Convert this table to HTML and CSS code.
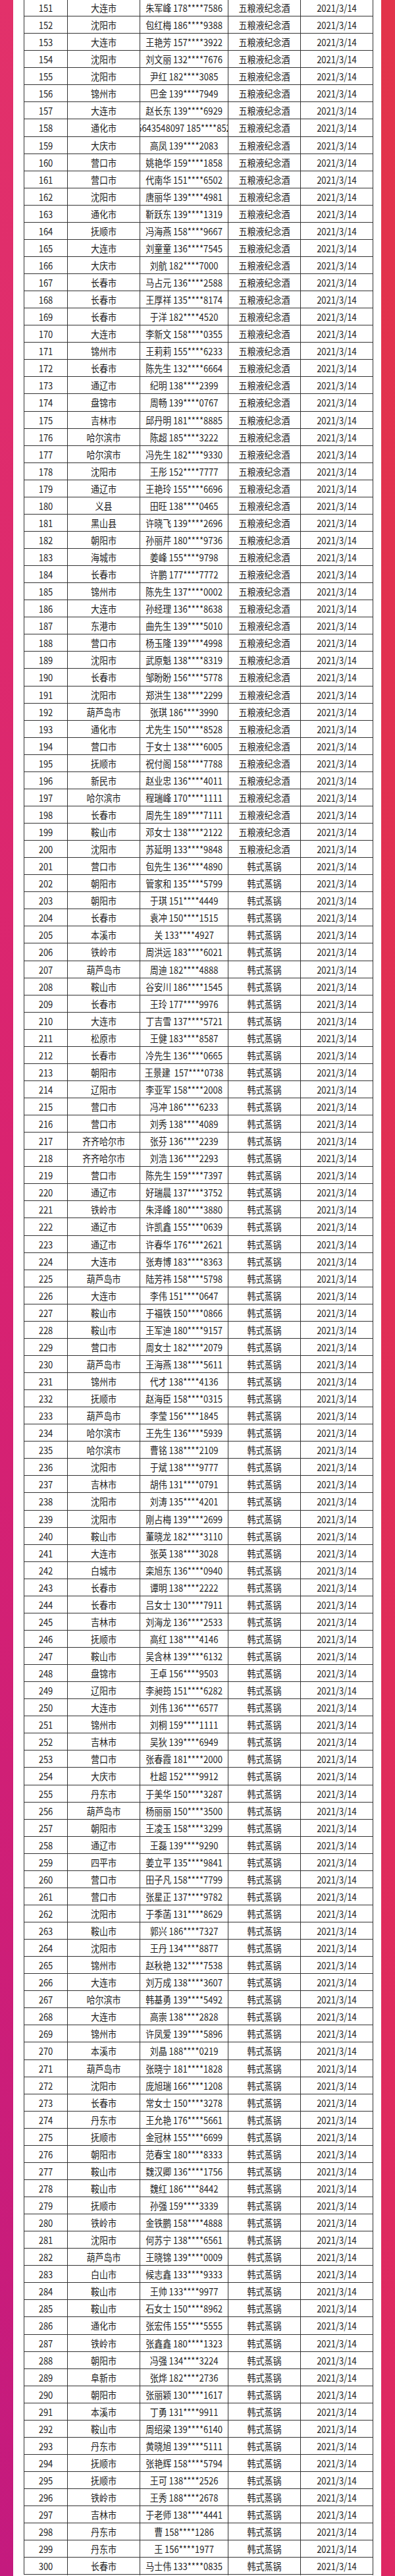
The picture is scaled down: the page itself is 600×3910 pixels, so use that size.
FILE: index.html
```html
<!DOCTYPE html>
<html lang="zh-CN">
<head>
<meta charset="utf-8">
<title>中奖名单</title>
<link rel="stylesheet" href="styles.css">
</head>
<body>
<div class="page">
  <div class="strip strip-l"></div>
  <div class="table">
    <div class="row"><span>151</span><span>大连市</span><span>朱军峰 178****7586</span><span>五粮液纪念酒</span><span>2021/3/14</span></div>
    <div class="row"><span>152</span><span>沈阳市</span><span>包红梅 186****9388</span><span>五粮液纪念酒</span><span>2021/3/14</span></div>
    <div class="row"><span>153</span><span>大连市</span><span>王艳芳 157****3922</span><span>五粮液纪念酒</span><span>2021/3/14</span></div>
    <div class="row"><span>154</span><span>沈阳市</span><span>刘文丽 132****7676</span><span>五粮液纪念酒</span><span>2021/3/14</span></div>
    <div class="row"><span>155</span><span>沈阳市</span><span>尹红 182****3085</span><span>五粮液纪念酒</span><span>2021/3/14</span></div>
    <div class="row"><span>156</span><span>锦州市</span><span>巴金 139****7949</span><span>五粮液纪念酒</span><span>2021/3/14</span></div>
    <div class="row"><span>157</span><span>大连市</span><span>赵长东 139****6929</span><span>五粮液纪念酒</span><span>2021/3/14</span></div>
    <div class="row"><span>158</span><span>通化市</span><span>15643548097 185****8522</span><span>五粮液纪念酒</span><span>2021/3/14</span></div>
    <div class="row"><span>159</span><span>大庆市</span><span>高凤 139****2083</span><span>五粮液纪念酒</span><span>2021/3/14</span></div>
    <div class="row"><span>160</span><span>营口市</span><span>姚艳华 159****1858</span><span>五粮液纪念酒</span><span>2021/3/14</span></div>
    <div class="row"><span>161</span><span>营口市</span><span>代南华 151****6502</span><span>五粮液纪念酒</span><span>2021/3/14</span></div>
    <div class="row"><span>162</span><span>沈阳市</span><span>唐丽华 139****4981</span><span>五粮液纪念酒</span><span>2021/3/14</span></div>
    <div class="row"><span>163</span><span>通化市</span><span>靳跃东 139****1319</span><span>五粮液纪念酒</span><span>2021/3/14</span></div>
    <div class="row"><span>164</span><span>抚顺市</span><span>冯海燕 158****9667</span><span>五粮液纪念酒</span><span>2021/3/14</span></div>
    <div class="row"><span>165</span><span>大连市</span><span>刘童童 136****7545</span><span>五粮液纪念酒</span><span>2021/3/14</span></div>
    <div class="row"><span>166</span><span>大庆市</span><span>刘航 182****7000</span><span>五粮液纪念酒</span><span>2021/3/14</span></div>
    <div class="row"><span>167</span><span>长春市</span><span>马占元 136****2588</span><span>五粮液纪念酒</span><span>2021/3/14</span></div>
    <div class="row"><span>168</span><span>长春市</span><span>王厚祥 135****8174</span><span>五粮液纪念酒</span><span>2021/3/14</span></div>
    <div class="row"><span>169</span><span>长春市</span><span>于洋 182****4520</span><span>五粮液纪念酒</span><span>2021/3/14</span></div>
    <div class="row"><span>170</span><span>大连市</span><span>李新文 158****0355</span><span>五粮液纪念酒</span><span>2021/3/14</span></div>
    <div class="row"><span>171</span><span>锦州市</span><span>王莉莉 155****6233</span><span>五粮液纪念酒</span><span>2021/3/14</span></div>
    <div class="row"><span>172</span><span>长春市</span><span>陈先生 132****6664</span><span>五粮液纪念酒</span><span>2021/3/14</span></div>
    <div class="row"><span>173</span><span>通辽市</span><span>纪明 138****2399</span><span>五粮液纪念酒</span><span>2021/3/14</span></div>
    <div class="row"><span>174</span><span>盘锦市</span><span>周畅 139****0767</span><span>五粮液纪念酒</span><span>2021/3/14</span></div>
    <div class="row"><span>175</span><span>吉林市</span><span>邱丹明 181****8885</span><span>五粮液纪念酒</span><span>2021/3/14</span></div>
    <div class="row"><span>176</span><span>哈尔滨市</span><span>陈超 185****3222</span><span>五粮液纪念酒</span><span>2021/3/14</span></div>
    <div class="row"><span>177</span><span>哈尔滨市</span><span>冯先生 182****9330</span><span>五粮液纪念酒</span><span>2021/3/14</span></div>
    <div class="row"><span>178</span><span>沈阳市</span><span>王彤 152****7777</span><span>五粮液纪念酒</span><span>2021/3/14</span></div>
    <div class="row"><span>179</span><span>通辽市</span><span>王艳玲 155****6696</span><span>五粮液纪念酒</span><span>2021/3/14</span></div>
    <div class="row"><span>180</span><span>义县</span><span>田旺 138****0465</span><span>五粮液纪念酒</span><span>2021/3/14</span></div>
    <div class="row"><span>181</span><span>黑山县</span><span>许晓飞 139****2696</span><span>五粮液纪念酒</span><span>2021/3/14</span></div>
    <div class="row"><span>182</span><span>朝阳市</span><span>孙丽芹 180****9736</span><span>五粮液纪念酒</span><span>2021/3/14</span></div>
    <div class="row"><span>183</span><span>海城市</span><span>姜峰 155****9798</span><span>五粮液纪念酒</span><span>2021/3/14</span></div>
    <div class="row"><span>184</span><span>长春市</span><span>许鹏 177****7772</span><span>五粮液纪念酒</span><span>2021/3/14</span></div>
    <div class="row"><span>185</span><span>锦州市</span><span>陈先生 137****0002</span><span>五粮液纪念酒</span><span>2021/3/14</span></div>
    <div class="row"><span>186</span><span>大连市</span><span>孙经理 136****8638</span><span>五粮液纪念酒</span><span>2021/3/14</span></div>
    <div class="row"><span>187</span><span>东港市</span><span>曲先生 139****5010</span><span>五粮液纪念酒</span><span>2021/3/14</span></div>
    <div class="row"><span>188</span><span>营口市</span><span>杨玉隆 139****4998</span><span>五粮液纪念酒</span><span>2021/3/14</span></div>
    <div class="row"><span>189</span><span>沈阳市</span><span>武原魁 138****8319</span><span>五粮液纪念酒</span><span>2021/3/14</span></div>
    <div class="row"><span>190</span><span>长春市</span><span>邹盼盼 156****5778</span><span>五粮液纪念酒</span><span>2021/3/14</span></div>
    <div class="row"><span>191</span><span>沈阳市</span><span>郑洪生 138****2299</span><span>五粮液纪念酒</span><span>2021/3/14</span></div>
    <div class="row"><span>192</span><span>葫芦岛市</span><span>张琪 186****3990</span><span>五粮液纪念酒</span><span>2021/3/14</span></div>
    <div class="row"><span>193</span><span>通化市</span><span>尤先生 150****8528</span><span>五粮液纪念酒</span><span>2021/3/14</span></div>
    <div class="row"><span>194</span><span>营口市</span><span>于女士 138****6005</span><span>五粮液纪念酒</span><span>2021/3/14</span></div>
    <div class="row"><span>195</span><span>抚顺市</span><span>祝付阁 158****7788</span><span>五粮液纪念酒</span><span>2021/3/14</span></div>
    <div class="row"><span>196</span><span>新民市</span><span>赵业忠 136****4011</span><span>五粮液纪念酒</span><span>2021/3/14</span></div>
    <div class="row"><span>197</span><span>哈尔滨市</span><span>程瑞峰 170****1111</span><span>五粮液纪念酒</span><span>2021/3/14</span></div>
    <div class="row"><span>198</span><span>长春市</span><span>周先生 189****7111</span><span>五粮液纪念酒</span><span>2021/3/14</span></div>
    <div class="row"><span>199</span><span>鞍山市</span><span>邓女士 138****2122</span><span>五粮液纪念酒</span><span>2021/3/14</span></div>
    <div class="row"><span>200</span><span>沈阳市</span><span>苏延明 133****9848</span><span>五粮液纪念酒</span><span>2021/3/14</span></div>
    <div class="row"><span>201</span><span>营口市</span><span>包先生 136****4890</span><span>韩式蒸锅</span><span>2021/3/14</span></div>
    <div class="row"><span>202</span><span>朝阳市</span><span>管家和 135****5799</span><span>韩式蒸锅</span><span>2021/3/14</span></div>
    <div class="row"><span>203</span><span>朝阳市</span><span>于琪 151****4449</span><span>韩式蒸锅</span><span>2021/3/14</span></div>
    <div class="row"><span>204</span><span>长春市</span><span>袁冲 150****1515</span><span>韩式蒸锅</span><span>2021/3/14</span></div>
    <div class="row"><span>205</span><span>本溪市</span><span>关 133****4927</span><span>韩式蒸锅</span><span>2021/3/14</span></div>
    <div class="row"><span>206</span><span>铁岭市</span><span>周洪远 183****6021</span><span>韩式蒸锅</span><span>2021/3/14</span></div>
    <div class="row"><span>207</span><span>葫芦岛市</span><span>周迪 182****4888</span><span>韩式蒸锅</span><span>2021/3/14</span></div>
    <div class="row"><span>208</span><span>鞍山市</span><span>谷安川 186****1545</span><span>韩式蒸锅</span><span>2021/3/14</span></div>
    <div class="row"><span>209</span><span>长春市</span><span>王玲 177****9976</span><span>韩式蒸锅</span><span>2021/3/14</span></div>
    <div class="row"><span>210</span><span>大连市</span><span>丁吉雪 137****5721</span><span>韩式蒸锅</span><span>2021/3/14</span></div>
    <div class="row"><span>211</span><span>松原市</span><span>王健 183****8587</span><span>韩式蒸锅</span><span>2021/3/14</span></div>
    <div class="row"><span>212</span><span>长春市</span><span>冷先生 136****0665</span><span>韩式蒸锅</span><span>2021/3/14</span></div>
    <div class="row"><span>213</span><span>朝阳市</span><span>王景建&nbsp;&nbsp;157****0738</span><span>韩式蒸锅</span><span>2021/3/14</span></div>
    <div class="row"><span>214</span><span>辽阳市</span><span>李亚军 158****2008</span><span>韩式蒸锅</span><span>2021/3/14</span></div>
    <div class="row"><span>215</span><span>营口市</span><span>冯冲 186****6233</span><span>韩式蒸锅</span><span>2021/3/14</span></div>
    <div class="row"><span>216</span><span>营口市</span><span>刘秀 138****4089</span><span>韩式蒸锅</span><span>2021/3/14</span></div>
    <div class="row"><span>217</span><span>齐齐哈尔市</span><span>张芬 136****2239</span><span>韩式蒸锅</span><span>2021/3/14</span></div>
    <div class="row"><span>218</span><span>齐齐哈尔市</span><span>刘浩 136****2293</span><span>韩式蒸锅</span><span>2021/3/14</span></div>
    <div class="row"><span>219</span><span>营口市</span><span>陈先生 159****7397</span><span>韩式蒸锅</span><span>2021/3/14</span></div>
    <div class="row"><span>220</span><span>通辽市</span><span>好瑞晨 137****3752</span><span>韩式蒸锅</span><span>2021/3/14</span></div>
    <div class="row"><span>221</span><span>铁岭市</span><span>朱泽峰 180****3880</span><span>韩式蒸锅</span><span>2021/3/14</span></div>
    <div class="row"><span>222</span><span>通辽市</span><span>许凯鑫 155****0639</span><span>韩式蒸锅</span><span>2021/3/14</span></div>
    <div class="row"><span>223</span><span>通辽市</span><span>许春华 176****2621</span><span>韩式蒸锅</span><span>2021/3/14</span></div>
    <div class="row"><span>224</span><span>大连市</span><span>张寿博 183****8363</span><span>韩式蒸锅</span><span>2021/3/14</span></div>
    <div class="row"><span>225</span><span>葫芦岛市</span><span>陆芳祎 158****5798</span><span>韩式蒸锅</span><span>2021/3/14</span></div>
    <div class="row"><span>226</span><span>大连市</span><span>李伟 151****0647</span><span>韩式蒸锅</span><span>2021/3/14</span></div>
    <div class="row"><span>227</span><span>鞍山市</span><span>于福铁 150****0866</span><span>韩式蒸锅</span><span>2021/3/14</span></div>
    <div class="row"><span>228</span><span>鞍山市</span><span>王军迪 180****9157</span><span>韩式蒸锅</span><span>2021/3/14</span></div>
    <div class="row"><span>229</span><span>营口市</span><span>周女士 182****2079</span><span>韩式蒸锅</span><span>2021/3/14</span></div>
    <div class="row"><span>230</span><span>葫芦岛市</span><span>王海燕 138****5611</span><span>韩式蒸锅</span><span>2021/3/14</span></div>
    <div class="row"><span>231</span><span>锦州市</span><span>代才 138****4136</span><span>韩式蒸锅</span><span>2021/3/14</span></div>
    <div class="row"><span>232</span><span>抚顺市</span><span>赵海臣 158****0315</span><span>韩式蒸锅</span><span>2021/3/14</span></div>
    <div class="row"><span>233</span><span>葫芦岛市</span><span>李莹 156****1845</span><span>韩式蒸锅</span><span>2021/3/14</span></div>
    <div class="row"><span>234</span><span>哈尔滨市</span><span>王先生 136****5939</span><span>韩式蒸锅</span><span>2021/3/14</span></div>
    <div class="row"><span>235</span><span>哈尔滨市</span><span>曹铭 138****2109</span><span>韩式蒸锅</span><span>2021/3/14</span></div>
    <div class="row"><span>236</span><span>沈阳市</span><span>于斌 138****9777</span><span>韩式蒸锅</span><span>2021/3/14</span></div>
    <div class="row"><span>237</span><span>吉林市</span><span>胡伟 131****0791</span><span>韩式蒸锅</span><span>2021/3/14</span></div>
    <div class="row"><span>238</span><span>沈阳市</span><span>刘涛 135****4201</span><span>韩式蒸锅</span><span>2021/3/14</span></div>
    <div class="row"><span>239</span><span>沈阳市</span><span>刚占梅 139****2699</span><span>韩式蒸锅</span><span>2021/3/14</span></div>
    <div class="row"><span>240</span><span>鞍山市</span><span>董晓龙 182****3110</span><span>韩式蒸锅</span><span>2021/3/14</span></div>
    <div class="row"><span>241</span><span>大连市</span><span>张英 138****3028</span><span>韩式蒸锅</span><span>2021/3/14</span></div>
    <div class="row"><span>242</span><span>白城市</span><span>栾旭东 136****0940</span><span>韩式蒸锅</span><span>2021/3/14</span></div>
    <div class="row"><span>243</span><span>长春市</span><span>谭明 138****2222</span><span>韩式蒸锅</span><span>2021/3/14</span></div>
    <div class="row"><span>244</span><span>长春市</span><span>吕女士 130****7911</span><span>韩式蒸锅</span><span>2021/3/14</span></div>
    <div class="row"><span>245</span><span>吉林市</span><span>刘海龙 136****2533</span><span>韩式蒸锅</span><span>2021/3/14</span></div>
    <div class="row"><span>246</span><span>抚顺市</span><span>高红 138****4146</span><span>韩式蒸锅</span><span>2021/3/14</span></div>
    <div class="row"><span>247</span><span>鞍山市</span><span>吴含林 139****6132</span><span>韩式蒸锅</span><span>2021/3/14</span></div>
    <div class="row"><span>248</span><span>盘锦市</span><span>王卓 156****9503</span><span>韩式蒸锅</span><span>2021/3/14</span></div>
    <div class="row"><span>249</span><span>辽阳市</span><span>李昶筠 151****6282</span><span>韩式蒸锅</span><span>2021/3/14</span></div>
    <div class="row"><span>250</span><span>大连市</span><span>刘伟 136****6577</span><span>韩式蒸锅</span><span>2021/3/14</span></div>
    <div class="row"><span>251</span><span>锦州市</span><span>刘桐 159****1111</span><span>韩式蒸锅</span><span>2021/3/14</span></div>
    <div class="row"><span>252</span><span>吉林市</span><span>吴狄 139****6949</span><span>韩式蒸锅</span><span>2021/3/14</span></div>
    <div class="row"><span>253</span><span>营口市</span><span>张春霞 181****2000</span><span>韩式蒸锅</span><span>2021/3/14</span></div>
    <div class="row"><span>254</span><span>大庆市</span><span>杜超 152****9912</span><span>韩式蒸锅</span><span>2021/3/14</span></div>
    <div class="row"><span>255</span><span>丹东市</span><span>于美华 150****3287</span><span>韩式蒸锅</span><span>2021/3/14</span></div>
    <div class="row"><span>256</span><span>葫芦岛市</span><span>杨丽丽 150****3500</span><span>韩式蒸锅</span><span>2021/3/14</span></div>
    <div class="row"><span>257</span><span>朝阳市</span><span>王凌玉 158****3299</span><span>韩式蒸锅</span><span>2021/3/14</span></div>
    <div class="row"><span>258</span><span>通辽市</span><span>王磊 139****9290</span><span>韩式蒸锅</span><span>2021/3/14</span></div>
    <div class="row"><span>259</span><span>四平市</span><span>姜立平 135****9841</span><span>韩式蒸锅</span><span>2021/3/14</span></div>
    <div class="row"><span>260</span><span>营口市</span><span>田子凡 158****7799</span><span>韩式蒸锅</span><span>2021/3/14</span></div>
    <div class="row"><span>261</span><span>营口市</span><span>张星正 137****9782</span><span>韩式蒸锅</span><span>2021/3/14</span></div>
    <div class="row"><span>262</span><span>沈阳市</span><span>于季菡 131****8629</span><span>韩式蒸锅</span><span>2021/3/14</span></div>
    <div class="row"><span>263</span><span>鞍山市</span><span>郭兴 186****7327</span><span>韩式蒸锅</span><span>2021/3/14</span></div>
    <div class="row"><span>264</span><span>沈阳市</span><span>王丹 134****8877</span><span>韩式蒸锅</span><span>2021/3/14</span></div>
    <div class="row"><span>265</span><span>锦州市</span><span>赵秋艳 132****7538</span><span>韩式蒸锅</span><span>2021/3/14</span></div>
    <div class="row"><span>266</span><span>大连市</span><span>刘万成 138****3607</span><span>韩式蒸锅</span><span>2021/3/14</span></div>
    <div class="row"><span>267</span><span>哈尔滨市</span><span>韩基勇 139****5492</span><span>韩式蒸锅</span><span>2021/3/14</span></div>
    <div class="row"><span>268</span><span>大连市</span><span>高崇 138****2828</span><span>韩式蒸锅</span><span>2021/3/14</span></div>
    <div class="row"><span>269</span><span>锦州市</span><span>许凤爱 139****5896</span><span>韩式蒸锅</span><span>2021/3/14</span></div>
    <div class="row"><span>270</span><span>本溪市</span><span>刘晶 188****0219</span><span>韩式蒸锅</span><span>2021/3/14</span></div>
    <div class="row"><span>271</span><span>葫芦岛市</span><span>张晓宁 181****1828</span><span>韩式蒸锅</span><span>2021/3/14</span></div>
    <div class="row"><span>272</span><span>沈阳市</span><span>庞旭瑞 166****1208</span><span>韩式蒸锅</span><span>2021/3/14</span></div>
    <div class="row"><span>273</span><span>长春市</span><span>常女士 150****3278</span><span>韩式蒸锅</span><span>2021/3/14</span></div>
    <div class="row"><span>274</span><span>丹东市</span><span>王允艳 176****5661</span><span>韩式蒸锅</span><span>2021/3/14</span></div>
    <div class="row"><span>275</span><span>抚顺市</span><span>金冠林 155****6699</span><span>韩式蒸锅</span><span>2021/3/14</span></div>
    <div class="row"><span>276</span><span>朝阳市</span><span>范春宝 180****8333</span><span>韩式蒸锅</span><span>2021/3/14</span></div>
    <div class="row"><span>277</span><span>鞍山市</span><span>魏汉卿 136****1756</span><span>韩式蒸锅</span><span>2021/3/14</span></div>
    <div class="row"><span>278</span><span>鞍山市</span><span>魏红 186****8442</span><span>韩式蒸锅</span><span>2021/3/14</span></div>
    <div class="row"><span>279</span><span>抚顺市</span><span>孙强 159****3339</span><span>韩式蒸锅</span><span>2021/3/14</span></div>
    <div class="row"><span>280</span><span>铁岭市</span><span>金铁鹏 158****4888</span><span>韩式蒸锅</span><span>2021/3/14</span></div>
    <div class="row"><span>281</span><span>沈阳市</span><span>何苏宁 138****6561</span><span>韩式蒸锅</span><span>2021/3/14</span></div>
    <div class="row"><span>282</span><span>葫芦岛市</span><span>王晓锦 139****0009</span><span>韩式蒸锅</span><span>2021/3/14</span></div>
    <div class="row"><span>283</span><span>白山市</span><span>候志鑫 133****9333</span><span>韩式蒸锅</span><span>2021/3/14</span></div>
    <div class="row"><span>284</span><span>鞍山市</span><span>王帅 133****9977</span><span>韩式蒸锅</span><span>2021/3/14</span></div>
    <div class="row"><span>285</span><span>鞍山市</span><span>石女士 150****8962</span><span>韩式蒸锅</span><span>2021/3/14</span></div>
    <div class="row"><span>286</span><span>通化市</span><span>张宏伟 155****5555</span><span>韩式蒸锅</span><span>2021/3/14</span></div>
    <div class="row"><span>287</span><span>铁岭市</span><span>张鑫鑫 180****1323</span><span>韩式蒸锅</span><span>2021/3/14</span></div>
    <div class="row"><span>288</span><span>朝阳市</span><span>冯强 134****3224</span><span>韩式蒸锅</span><span>2021/3/14</span></div>
    <div class="row"><span>289</span><span>阜新市</span><span>张烨 182****2736</span><span>韩式蒸锅</span><span>2021/3/14</span></div>
    <div class="row"><span>290</span><span>朝阳市</span><span>张丽颖 130****1617</span><span>韩式蒸锅</span><span>2021/3/14</span></div>
    <div class="row"><span>291</span><span>本溪市</span><span>丁勇 131****9911</span><span>韩式蒸锅</span><span>2021/3/14</span></div>
    <div class="row"><span>292</span><span>鞍山市</span><span>周绍梁 139****6140</span><span>韩式蒸锅</span><span>2021/3/14</span></div>
    <div class="row"><span>293</span><span>丹东市</span><span>黄晓旭 139****5111</span><span>韩式蒸锅</span><span>2021/3/14</span></div>
    <div class="row"><span>294</span><span>抚顺市</span><span>张艳辉 158****5794</span><span>韩式蒸锅</span><span>2021/3/14</span></div>
    <div class="row"><span>295</span><span>抚顺市</span><span>王可 138****2526</span><span>韩式蒸锅</span><span>2021/3/14</span></div>
    <div class="row"><span>296</span><span>铁岭市</span><span>王秀 188****2678</span><span>韩式蒸锅</span><span>2021/3/14</span></div>
    <div class="row"><span>297</span><span>吉林市</span><span>于老师 138****4441</span><span>韩式蒸锅</span><span>2021/3/14</span></div>
    <div class="row"><span>298</span><span>丹东市</span><span>曹 158****1286</span><span>韩式蒸锅</span><span>2021/3/14</span></div>
    <div class="row"><span>299</span><span>丹东市</span><span>王 156****1977</span><span>韩式蒸锅</span><span>2021/3/14</span></div>
    <div class="row"><span>300</span><span>长春市</span><span>马士伟 133****0835</span><span>韩式蒸锅</span><span>2021/3/14</span></div>
  </div>
  <div class="gap"></div>
  <div class="strip strip-r"></div>
</div>
</body>
</html>
```

FILE: styles.css
```css
html, body {
  margin: 0;
  padding: 0;
  background: #ffffff;
}

body {
  font-family: "Noto Sans CJK SC", "Noto Sans", sans-serif;
  color: #1e1e1e;
}

.page {
  display: flex;
  height: 3910px;
  overflow: hidden;
}

.strip {
  flex: none;
  height: 100%;
}

.strip-l {
  width: 20px;
  background: linear-gradient(to bottom, #e2316a 0%, #d92370 45%, #c41a7e 100%);
}

.strip-r {
  width: 21px;
  background: linear-gradient(to bottom, #e2334a 0%, #e02e55 50%, #dd2763 100%);
}

.table {
  flex: none;
  width: 531px;
  margin-left: 16px;
  margin-top: -1px;
  box-sizing: border-box;
  border-left: 1px solid #333333;
  align-self: flex-start;
}

.gap {
  flex: 1;
}

.row {
  display: grid;
  grid-template-columns: 66px 110px 134px 110px 110px;
  height: 26.0625px;
  box-sizing: border-box;
  border-bottom: 1px solid #333333;
}

.row > span {
  display: flex;
  align-items: center;
  justify-content: center;
  box-sizing: border-box;
  border-right: 1px solid #333333;
  overflow: hidden;
  white-space: nowrap;
  font-size: 13px;
  line-height: 1;
  transform: scaleY(1.15);
}
```
